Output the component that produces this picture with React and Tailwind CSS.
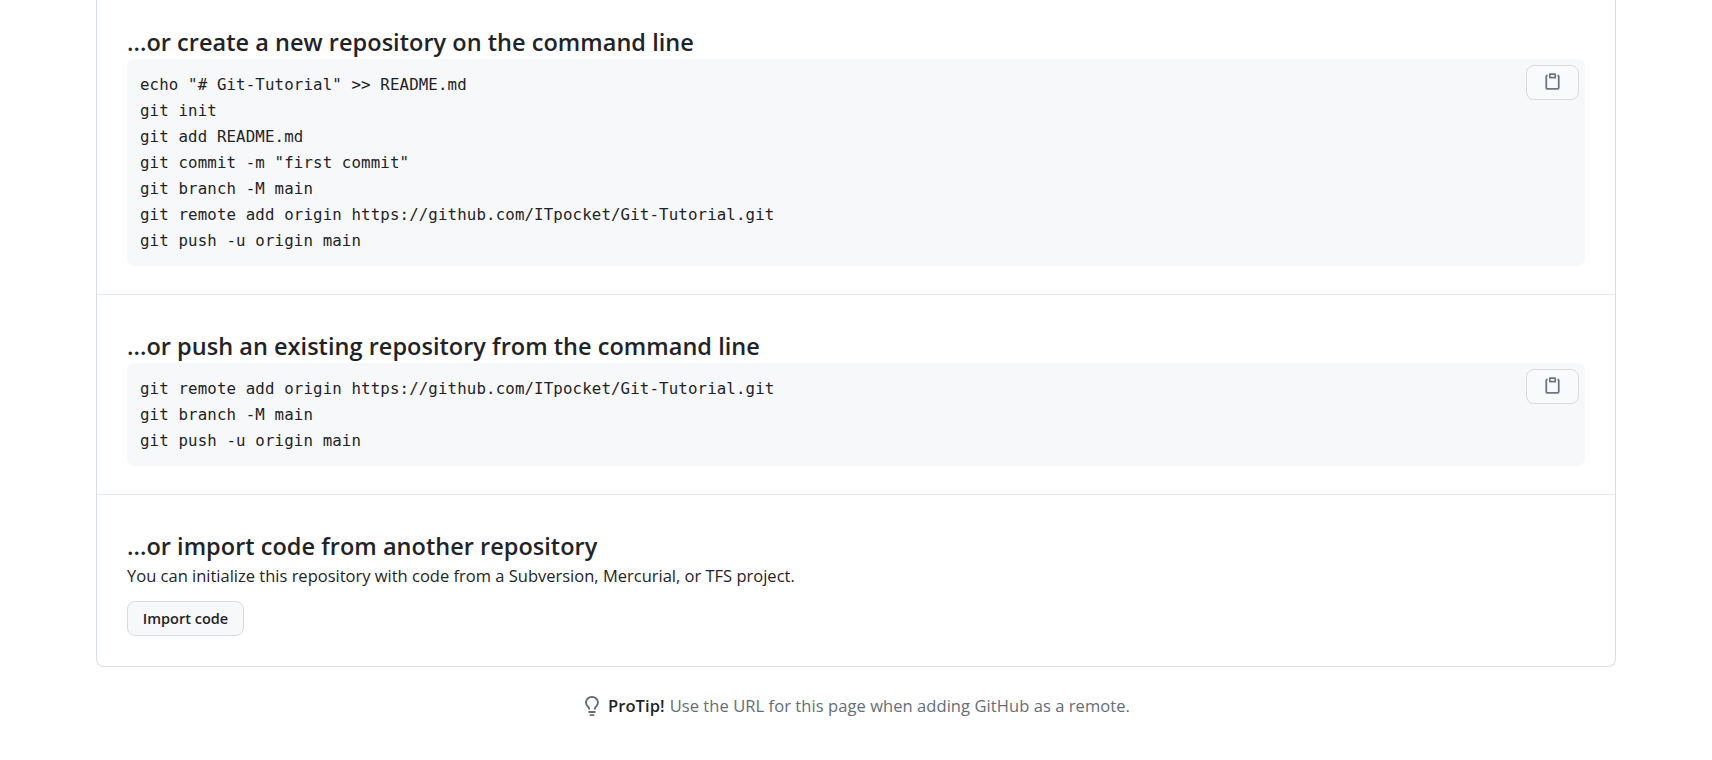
const sans = "font-['Open_Sans',sans-serif]";

function PasteIcon() {
  return (
    <svg width="19" height="19" viewBox="0 0 16 16" fill="currentColor">
      <path d="M5.75 1a.75.75 0 0 0-.75.75v3c0 .414.336.75.75.75h4.5a.75.75 0 0 0 .75-.75v-3a.75.75 0 0 0-.75-.75h-4.5Zm.75 3V2.5h3V4h-3Zm-2.874-.467a.75.75 0 0 0-.752-1.298A1.75 1.75 0 0 0 2 3.75v9.5c0 .966.784 1.75 1.75 1.75h8.5A1.75 1.75 0 0 0 14 13.25v-9.5a1.75 1.75 0 0 0-.874-1.515.75.75 0 1 0-.752 1.298.25.25 0 0 1 .126.217v9.5a.25.25 0 0 1-.25.25h-8.5a.25.25 0 0 1-.25-.25v-9.5a.25.25 0 0 1 .126-.217Z" />
    </svg>
  );
}

function BulbIcon() {
  return (
    <svg width="20" height="20" viewBox="0 0 16 16" fill="currentColor" className="mr-[6px]">
      <path d="M8 1.5c-2.363 0-4 1.69-4 3.75 0 .984.424 1.625.984 2.304l.214.253c.223.264.47.556.673.848.284.411.537.896.621 1.49a.75.75 0 0 1-1.484.211c-.04-.282-.163-.547-.37-.847a8.456 8.456 0 0 0-.542-.68c-.084-.1-.173-.205-.268-.32C3.201 7.75 2.5 6.766 2.5 5.25 2.5 2.31 4.863 0 8 0s5.5 2.31 5.5 5.25c0 1.516-.701 2.5-1.328 3.259-.095.115-.184.22-.268.319-.207.245-.383.453-.541.681-.208.3-.33.565-.37.847a.751.751 0 0 1-1.485-.212c.084-.593.337-1.078.621-1.489.203-.292.45-.584.673-.848.075-.088.147-.173.213-.253.561-.679.985-1.32.985-2.304 0-2.06-1.637-3.75-4-3.75ZM5.75 12h4.5a.75.75 0 0 1 0 1.5h-4.5a.75.75 0 0 1 0-1.5ZM6 15.25a.75.75 0 0 1 .75-.75h2.5a.75.75 0 0 1 0 1.5h-2.5a.75.75 0 0 1-.75-.75Z" />
    </svg>
  );
}

function CodeBlock({ lines }) {
  return (
    <div className="relative mt-[1px] rounded-lg bg-[#f6f8fa] px-[13px] pt-[13px] pb-[12px]">
      <pre className="font-['DejaVu_Sans_Mono',monospace] text-[15.75px] leading-[26px] tracking-[0.13px] text-[#1f2328]">
        {lines.join("\n")}
      </pre>
      <button className="absolute right-[6px] top-[6px] flex h-[35px] w-[53px] items-center justify-center rounded-lg border border-[#d8dce0] bg-[#f9fafc] pb-[2px] text-[#6e7781]">
        <PasteIcon />
      </button>
    </div>
  );
}

function Heading({ children }) {
  return (
    <h3 className="text-[23.5px] leading-[31px] font-semibold tracking-[0.03px] text-[#1f2328]">
      {children}
    </h3>
  );
}

export default function App() {
  return (
    <div className={`min-h-[760px] bg-white ${sans}`}>
      <div className="mx-[96px] rounded-b-lg border-x border-b border-[#d8dee4]">
        <section className="border-b border-[#e6e9ed] px-[30px] pt-[27px] pb-[28px]">
          <Heading>...or create a new repository on the command line</Heading>
          <CodeBlock
            lines={[
              'echo "# Git-Tutorial" >> README.md',
              "git init",
              "git add README.md",
              'git commit -m "first commit"',
              "git branch -M main",
              "git remote add origin https://github.com/ITpocket/Git-Tutorial.git",
              "git push -u origin main",
            ]}
          />
        </section>
        <section className="border-b border-[#e6e9ed] px-[30px] pt-[36px] pb-[28px]">
          <Heading>...or push an existing repository from the command line</Heading>
          <CodeBlock
            lines={[
              "git remote add origin https://github.com/ITpocket/Git-Tutorial.git",
              "git branch -M main",
              "git push -u origin main",
            ]}
          />
        </section>
        <section className="px-[30px] pt-[36px] pb-[30px]">
          <Heading>...or import code from another repository</Heading>
          <p className="mt-[1px] text-[16.5px] leading-[26px] text-[#1f2328]">
            You can initialize this repository with code from a Subversion, Mercurial, or TFS project.
          </p>
          <button className="mt-[12px] flex h-[35px] w-[117px] items-center justify-center rounded-lg border border-[#d8dce0] bg-[#f6f8fa] text-[14.5px] font-[550] text-[#1f2328]">
            Import code
          </button>
        </section>
      </div>
      <p className="mt-[27px] flex items-center justify-center text-[16.5px] leading-[24px] tracking-[0.07px] text-[#656d76]">
        <BulbIcon />
        <strong className="mr-[5px] font-semibold text-[#1f2328]">ProTip!</strong>
        Use the URL for this page when adding GitHub as a remote.
      </p>
    </div>
  );
}
